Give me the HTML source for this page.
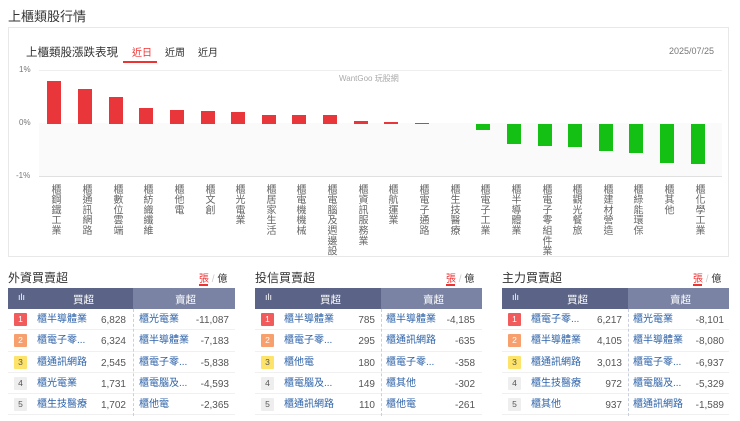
<!DOCTYPE html>
<html><head><meta charset="utf-8"><style>
*{margin:0;padding:0;box-sizing:border-box}
body{width:740px;height:421px;background:#fff;font-family:"Liberation Sans","Noto Sans CJK TC",sans-serif;position:relative;overflow:hidden;color:#333}
.a{position:absolute}
.h1{left:8px;top:6px;font-size:13px;color:#333}
.panel{left:8px;top:27px;width:721px;height:230px;border:1px solid #e8e8e8;overflow:hidden}
.bar{position:absolute;width:14px}
.r{background:#e8363a}.g{background:#13c013}
.lbl{position:absolute;top:183px;writing-mode:vertical-rl;font-size:10px;line-height:12px;color:#666;letter-spacing:0.3px;width:12px}
.t{font-size:12px;color:#333}
.tbl{position:absolute;top:288px;width:227px}
.hd{height:21px;background:#5b6487;color:#fff;font-size:10.5px;position:relative}
.hd .rt{position:absolute;top:0;bottom:0;background:#7a83a4}
.row{height:21.3px;position:relative;font-size:10px;border-bottom:1px solid #f0f0f0}
.bd{position:absolute;left:6px;top:4px;width:13px;height:13px;font-size:8.5px;color:#fff;text-align:center;line-height:13px;border-radius:1px}
.b1{background:#f25b5b}.b2{background:#f7a06e}.b3{background:#fde36a;color:#555}.b4,.b5{background:#eee;color:#555}
.n{position:absolute;top:4px;color:#2d62a8;line-height:14px}
.v{position:absolute;top:5px;text-align:right;color:#555;width:50px;line-height:14px}
.tg{position:absolute;font-size:10px;top:270px}
</style></head><body>
<div class="a h1">上櫃類股行情</div>
<div class="a panel">
<div class="a" style="left:17px;top:16px;font-size:11.5px;color:#333">上櫃類股漲跌表現</div>
<div class="a" style="left:123px;top:16px;font-size:10px;color:#e33">近日</div>
<div class="a" style="left:114px;top:33px;width:34px;height:2px;background:#e33"></div>
<div class="a" style="left:156px;top:16px;font-size:10px;color:#333">近周</div>
<div class="a" style="left:189px;top:16px;font-size:10px;color:#333">近月</div>
<div class="a" style="left:660px;top:18px;font-size:9px;color:#777">2025/07/25</div>
<div class="a" style="left:30px;top:42px;width:683px;height:1px;background:#eee"></div>
<div class="a" style="left:30px;top:95px;width:683px;height:53px;background:#fafafa"></div>
<div class="a" style="left:30px;top:148px;width:683px;height:1px;background:#e0e0e0"></div>
<div class="a" style="left:10px;top:37px;font-size:8px;color:#777">1%</div>
<div class="a" style="left:10px;top:90px;font-size:8px;color:#777">0%</div>
<div class="a" style="left:7px;top:143px;font-size:8px;color:#777">-1%</div>
<div class="a" style="left:330px;top:45px;font-size:8px;color:#aaa">WantGoo 玩股網</div>
<div style="position:absolute;left:-8px;top:-27px;width:740px;height:300px">
<div class="bar r" style="left:46px;top:80px;height:43px"></div>
<div class="bar r" style="left:77px;top:88px;height:35px"></div>
<div class="bar r" style="left:108px;top:96px;height:27px"></div>
<div class="bar r" style="left:138px;top:107px;height:16px"></div>
<div class="bar r" style="left:169px;top:109px;height:14px"></div>
<div class="bar r" style="left:200px;top:110px;height:13px"></div>
<div class="bar r" style="left:230px;top:111px;height:12px"></div>
<div class="bar r" style="left:261px;top:114px;height:9px"></div>
<div class="bar r" style="left:291px;top:114px;height:9px"></div>
<div class="bar r" style="left:322px;top:114px;height:9px"></div>
<div class="bar r" style="left:353px;top:120px;height:3px"></div>
<div class="bar r" style="left:383px;top:121px;height:2px"></div>
<div class="bar r" style="left:414px;top:122px;height:1px"></div>
<div class="bar g" style="left:475px;top:123px;height:6px"></div>
<div class="bar g" style="left:506px;top:123px;height:20px"></div>
<div class="bar g" style="left:537px;top:123px;height:22px"></div>
<div class="bar g" style="left:567px;top:123px;height:23px"></div>
<div class="bar g" style="left:598px;top:123px;height:27px"></div>
<div class="bar g" style="left:628px;top:123px;height:29px"></div>
<div class="bar g" style="left:659px;top:123px;height:39px"></div>
<div class="bar g" style="left:690px;top:123px;height:40px"></div>
<div class="lbl" style="left:47px">櫃鋼鐵工業</div>
<div class="lbl" style="left:78px">櫃通訊網路</div>
<div class="lbl" style="left:109px">櫃數位雲端</div>
<div class="lbl" style="left:139px">櫃紡織纖維</div>
<div class="lbl" style="left:170px">櫃他電</div>
<div class="lbl" style="left:201px">櫃文創</div>
<div class="lbl" style="left:231px">櫃光電業</div>
<div class="lbl" style="left:262px">櫃居家生活</div>
<div class="lbl" style="left:292px">櫃電機機械</div>
<div class="lbl" style="left:323px">櫃電腦及週邊設</div>
<div class="lbl" style="left:354px">櫃資訊服務業</div>
<div class="lbl" style="left:384px">櫃航運業</div>
<div class="lbl" style="left:415px">櫃電子通路</div>
<div class="lbl" style="left:446px">櫃生技醫療</div>
<div class="lbl" style="left:476px">櫃電子工業</div>
<div class="lbl" style="left:507px">櫃半導體業</div>
<div class="lbl" style="left:538px">櫃電子零組件業</div>
<div class="lbl" style="left:568px">櫃觀光餐旅</div>
<div class="lbl" style="left:599px">櫃建材營造</div>
<div class="lbl" style="left:629px">櫃綠能環保</div>
<div class="lbl" style="left:660px">櫃其他</div>
<div class="lbl" style="left:691px">櫃化學工業</div>
</div>
</div>

<div class="a t" style="left:8px;top:269px">外資買賣超</div>
<div class="tg" style="left:199px"><span style="color:#e33">張</span> <span style="color:#ccc">/</span> 億</div>
<div class="a" style="left:199px;top:284px;width:9px;height:2px;background:#e33"></div>
<div class="tbl" style="left:8px">
<div class="hd"><span class="a" style="left:10px;top:4px;font-size:9px">ılı</span><span class="a" style="left:65px;top:4px">買超</span><div class="rt" style="left:125px;right:0"><span class="a" style="left:42px;top:4px">賣超</span></div></div>
<div class="row"><span class="bd b1">1</span><span class="n" style="left:29px">櫃半導體業</span><span class="v" style="left:68px">6,828</span><span class="n" style="left:131px">櫃光電業</span><span class="v" style="left:171px">-11,087</span></div>
<div class="row"><span class="bd b2">2</span><span class="n" style="left:29px">櫃電子零...</span><span class="v" style="left:68px">6,324</span><span class="n" style="left:131px">櫃半導體業</span><span class="v" style="left:171px">-7,183</span></div>
<div class="row"><span class="bd b3">3</span><span class="n" style="left:29px">櫃通訊網路</span><span class="v" style="left:68px">2,545</span><span class="n" style="left:131px">櫃電子零...</span><span class="v" style="left:171px">-5,838</span></div>
<div class="row"><span class="bd b4">4</span><span class="n" style="left:29px">櫃光電業</span><span class="v" style="left:68px">1,731</span><span class="n" style="left:131px">櫃電腦及...</span><span class="v" style="left:171px">-4,593</span></div>
<div class="row"><span class="bd b5">5</span><span class="n" style="left:29px">櫃生技醫療</span><span class="v" style="left:68px">1,702</span><span class="n" style="left:131px">櫃他電</span><span class="v" style="left:171px">-2,365</span></div>
<div class="a" style="left:125px;top:21px;height:107px;border-left:1px dashed #c8d0e0"></div>
</div>

<div class="a t" style="left:255px;top:269px">投信買賣超</div>
<div class="tg" style="left:446px"><span style="color:#e33">張</span> <span style="color:#ccc">/</span> 億</div>
<div class="a" style="left:446px;top:284px;width:9px;height:2px;background:#e33"></div>
<div class="tbl" style="left:255px">
<div class="hd"><span class="a" style="left:10px;top:4px;font-size:9px">ılı</span><span class="a" style="left:65px;top:4px">買超</span><div class="rt" style="left:126px;right:0"><span class="a" style="left:42px;top:4px">賣超</span></div></div>
<div class="row"><span class="bd b1">1</span><span class="n" style="left:29px">櫃半導體業</span><span class="v" style="left:70px">785</span><span class="n" style="left:131px">櫃半導體業</span><span class="v" style="left:170px">-4,185</span></div>
<div class="row"><span class="bd b2">2</span><span class="n" style="left:29px">櫃電子零...</span><span class="v" style="left:70px">295</span><span class="n" style="left:131px">櫃通訊網路</span><span class="v" style="left:170px">-635</span></div>
<div class="row"><span class="bd b3">3</span><span class="n" style="left:29px">櫃他電</span><span class="v" style="left:70px">180</span><span class="n" style="left:131px">櫃電子零...</span><span class="v" style="left:170px">-358</span></div>
<div class="row"><span class="bd b4">4</span><span class="n" style="left:29px">櫃電腦及...</span><span class="v" style="left:70px">149</span><span class="n" style="left:131px">櫃其他</span><span class="v" style="left:170px">-302</span></div>
<div class="row"><span class="bd b5">5</span><span class="n" style="left:29px">櫃通訊網路</span><span class="v" style="left:70px">110</span><span class="n" style="left:131px">櫃他電</span><span class="v" style="left:170px">-261</span></div>
<div class="a" style="left:126px;top:21px;height:107px;border-left:1px dashed #c8d0e0"></div>
</div>

<div class="a t" style="left:502px;top:269px">主力買賣超</div>
<div class="tg" style="left:693px"><span style="color:#e33">張</span> <span style="color:#ccc">/</span> 億</div>
<div class="a" style="left:693px;top:284px;width:9px;height:2px;background:#e33"></div>
<div class="tbl" style="left:502px">
<div class="hd"><span class="a" style="left:10px;top:4px;font-size:9px">ılı</span><span class="a" style="left:65px;top:4px">買超</span><div class="rt" style="left:126px;right:0"><span class="a" style="left:42px;top:4px">賣超</span></div></div>
<div class="row"><span class="bd b1">1</span><span class="n" style="left:29px">櫃電子零...</span><span class="v" style="left:70px">6,217</span><span class="n" style="left:131px">櫃光電業</span><span class="v" style="left:172px">-8,101</span></div>
<div class="row"><span class="bd b2">2</span><span class="n" style="left:29px">櫃半導體業</span><span class="v" style="left:70px">4,105</span><span class="n" style="left:131px">櫃半導體業</span><span class="v" style="left:172px">-8,080</span></div>
<div class="row"><span class="bd b3">3</span><span class="n" style="left:29px">櫃通訊網路</span><span class="v" style="left:70px">3,013</span><span class="n" style="left:131px">櫃電子零...</span><span class="v" style="left:172px">-6,937</span></div>
<div class="row"><span class="bd b4">4</span><span class="n" style="left:29px">櫃生技醫療</span><span class="v" style="left:70px">972</span><span class="n" style="left:131px">櫃電腦及...</span><span class="v" style="left:172px">-5,329</span></div>
<div class="row"><span class="bd b5">5</span><span class="n" style="left:29px">櫃其他</span><span class="v" style="left:70px">937</span><span class="n" style="left:131px">櫃通訊網路</span><span class="v" style="left:172px">-1,589</span></div>
<div class="a" style="left:126px;top:21px;height:107px;border-left:1px dashed #c8d0e0"></div>
</div>
</body></html>
